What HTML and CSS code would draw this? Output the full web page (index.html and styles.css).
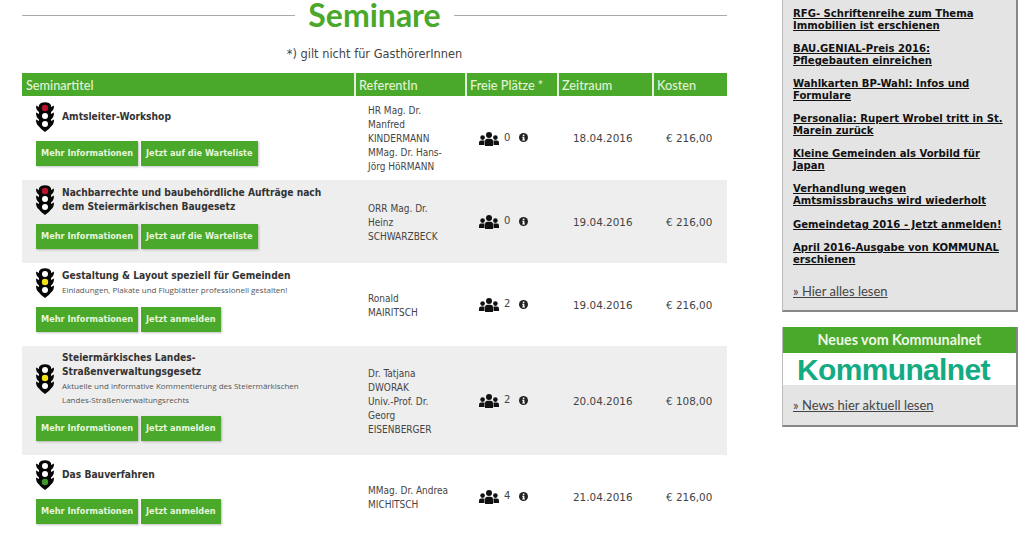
FILE: index.html
```html
<!DOCTYPE html>
<html lang="de">
<head>
<meta charset="UTF-8">
<meta name="viewport" content="width=device-width, initial-scale=1.0">
<title>Seminare</title>
<link rel="stylesheet" href="styles.css">
</head>
<body>

<svg class="sprites" width="0" height="0">
    <defs>
        <g id="light-body">
            <path d="M5 1 Q9 -0.5 13 1 L15 3 L15 5 L18 3.5 Q18 8 15 10 L15 12 L18 10.5 Q18 15.5 15 17.5 L15 19 L18 17.5 Q18 22.5 15 24.5 Q13 27.5 9 30 Q5 27.5 3 24.5 Q0 22.5 0 17.5 L3 19 L3 17.5 Q0 15.5 0 10.5 L3 12 L3 10 Q0 8 0 3.5 L3 5 L3 3 Z" fill="#050505"/>
        </g>
        <g id="people">
            <circle cx="10" cy="3" r="3"/>
            <circle cx="3.6" cy="5.6" r="2.3"/>
            <circle cx="16.4" cy="5.6" r="2.3"/>
            <path d="M6 14 L6 9.5 Q6 6.8 8.5 6.8 L11.5 6.8 Q14 6.8 14 9.5 L14 14 Z"/>
            <path d="M0 13 L0 10.5 Q0 8.5 2 8.5 L5.5 8.5 L5.5 13 Z"/>
            <path d="M20 13 L20 10.5 Q20 8.5 18 8.5 L14.5 8.5 L14.5 13 Z"/>
        </g>
        <g id="info">
            <circle cx="4.5" cy="4.5" r="4.5" fill="#222"/>
            <rect x="3.8" y="1.6" width="1.6" height="1.5" fill="#fff"/>
            <path d="M3.2 3.8 L5.4 3.8 L5.4 6.6 L6 6.6 L6 7.5 L3.2 7.5 L3.2 6.6 L3.8 6.6 L3.8 4.7 L3.2 4.7 Z" fill="#fff"/>
        </g>
    </defs>
</svg>

<div class="page">

    <main class="content">
        <div class="page-title">
            <h1>Seminare</h1>
        </div>
        <p class="note">*) gilt nicht für GasthörerInnen</p>

        <table class="seminars">
            <colgroup>
                <col class="col-title">
                <col class="col-ref">
                <col class="col-free">
                <col class="col-date">
                <col class="col-cost">
            </colgroup>
            <thead>
                <tr>
                    <th>Seminartitel</th>
                    <th>ReferentIn</th>
                    <th>Freie Plätze *</th>
                    <th>Zeitraum</th>
                    <th>Kosten</th>
                </tr>
            </thead>
            <tbody>
                <!-- Seminar 1 -->
                <tr>
                    <td class="cell-title">
                        <div class="seminar-head">
                            <svg class="light" viewBox="0 0 18 30"><use href="#light-body"/><circle cx="9" cy="6" r="3.2" fill="#b5122b"/><circle cx="9" cy="14" r="3" fill="#fff"/><circle cx="9" cy="22" r="3" fill="#fff"/></svg>
                            <div class="seminar-text">
                                <div class="seminar-name">Amtsleiter-Workshop</div>
                            </div>
                        </div>
                        <div class="actions">
                            <a class="btn" href="#">Mehr Informationen</a>
                            <a class="btn" href="#">Jetzt auf die Warteliste</a>
                        </div>
                    </td>
                    <td class="cell-ref">HR Mag. Dr.<br>Manfred<br>KINDERMANN<br>MMag. Dr. Hans-<br>Jörg HöRMANN</td>
                    <td class="cell-free">
                        <div class="free">
                            <svg class="people" viewBox="0 0 20 14"><use href="#people"/></svg>
                            <span class="free-count">0</span>
                            <svg class="info" viewBox="0 0 9 9"><use href="#info"/></svg>
                        </div>
                    </td>
                    <td class="cell-date">18.04.2016</td>
                    <td class="cell-cost">€ 216,00</td>
                </tr>
                <!-- Seminar 2 -->
                <tr>
                    <td class="cell-title">
                        <div class="seminar-head">
                            <svg class="light" viewBox="0 0 18 30"><use href="#light-body"/><circle cx="9" cy="6" r="3.2" fill="#b5122b"/><circle cx="9" cy="14" r="3" fill="#fff"/><circle cx="9" cy="22" r="3" fill="#fff"/></svg>
                            <div class="seminar-text">
                                <div class="seminar-name">Nachbarrechte und baubehördliche Aufträge nach<br>dem Steiermärkischen Baugesetz</div>
                            </div>
                        </div>
                        <div class="actions">
                            <a class="btn" href="#">Mehr Informationen</a>
                            <a class="btn" href="#">Jetzt auf die Warteliste</a>
                        </div>
                    </td>
                    <td class="cell-ref">ORR Mag. Dr.<br>Heinz<br>SCHWARZBECK</td>
                    <td class="cell-free">
                        <div class="free">
                            <svg class="people" viewBox="0 0 20 14"><use href="#people"/></svg>
                            <span class="free-count">0</span>
                            <svg class="info" viewBox="0 0 9 9"><use href="#info"/></svg>
                        </div>
                    </td>
                    <td class="cell-date">19.04.2016</td>
                    <td class="cell-cost">€ 216,00</td>
                </tr>
                <!-- Seminar 3 -->
                <tr>
                    <td class="cell-title">
                        <div class="seminar-head">
                            <svg class="light" viewBox="0 0 18 30"><use href="#light-body"/><circle cx="9" cy="6" r="3" fill="#fff"/><circle cx="9" cy="14" r="3.2" fill="#f2e01b"/><circle cx="9" cy="22" r="3" fill="#fff"/></svg>
                            <div class="seminar-text">
                                <div class="seminar-name">Gestaltung &amp; Layout speziell für Gemeinden</div>
                                <div class="seminar-desc">Einladungen, Plakate und Flugblätter professionell gestalten!</div>
                            </div>
                        </div>
                        <div class="actions">
                            <a class="btn" href="#">Mehr Informationen</a>
                            <a class="btn" href="#">Jetzt anmelden</a>
                        </div>
                    </td>
                    <td class="cell-ref">Ronald<br>MAIRITSCH</td>
                    <td class="cell-free">
                        <div class="free">
                            <svg class="people" viewBox="0 0 20 14"><use href="#people"/></svg>
                            <span class="free-count">2</span>
                            <svg class="info" viewBox="0 0 9 9"><use href="#info"/></svg>
                        </div>
                    </td>
                    <td class="cell-date">19.04.2016</td>
                    <td class="cell-cost">€ 216,00</td>
                </tr>
                <!-- Seminar 4 -->
                <tr>
                    <td class="cell-title">
                        <div class="seminar-head">
                            <svg class="light" viewBox="0 0 18 30"><use href="#light-body"/><circle cx="9" cy="6" r="3" fill="#fff"/><circle cx="9" cy="14" r="3.2" fill="#f2e01b"/><circle cx="9" cy="22" r="3" fill="#fff"/></svg>
                            <div class="seminar-text">
                                <div class="seminar-name">Steiermärkisches Landes-<br>Straßenverwaltungsgesetz</div>
                                <div class="seminar-desc">Aktuelle und informative Kommentierung des Steiermärkischen<br>Landes-Straßenverwaltungsrechts</div>
                            </div>
                        </div>
                        <div class="actions">
                            <a class="btn" href="#">Mehr Informationen</a>
                            <a class="btn" href="#">Jetzt anmelden</a>
                        </div>
                    </td>
                    <td class="cell-ref">Dr. Tatjana<br>DWORAK<br>Univ.-Prof. Dr.<br>Georg<br>EISENBERGER</td>
                    <td class="cell-free">
                        <div class="free">
                            <svg class="people" viewBox="0 0 20 14"><use href="#people"/></svg>
                            <span class="free-count">2</span>
                            <svg class="info" viewBox="0 0 9 9"><use href="#info"/></svg>
                        </div>
                    </td>
                    <td class="cell-date">20.04.2016</td>
                    <td class="cell-cost">€ 108,00</td>
                </tr>
                <!-- Seminar 5 -->
                <tr>
                    <td class="cell-title">
                        <div class="seminar-head">
                            <svg class="light" viewBox="0 0 18 30"><use href="#light-body"/><circle cx="9" cy="6" r="3" fill="#fff"/><circle cx="9" cy="14" r="3" fill="#fff"/><circle cx="9" cy="22" r="3.2" fill="#3f9a2c"/></svg>
                            <div class="seminar-text">
                                <div class="seminar-name">Das Bauverfahren</div>
                            </div>
                        </div>
                        <div class="actions">
                            <a class="btn" href="#">Mehr Informationen</a>
                            <a class="btn" href="#">Jetzt anmelden</a>
                        </div>
                    </td>
                    <td class="cell-ref">MMag. Dr. Andrea<br>MICHITSCH</td>
                    <td class="cell-free">
                        <div class="free">
                            <svg class="people" viewBox="0 0 20 14"><use href="#people"/></svg>
                            <span class="free-count">4</span>
                            <svg class="info" viewBox="0 0 9 9"><use href="#info"/></svg>
                        </div>
                    </td>
                    <td class="cell-date">21.04.2016</td>
                    <td class="cell-cost">€ 216,00</td>
                </tr>
            </tbody>
        </table>
    </main>

    <aside class="sidebar">
        <div class="panel panel-news">
            <a class="news-link" href="#">RFG- Schriftenreihe zum Thema Immobilien ist erschienen</a>
            <a class="news-link" href="#">BAU.GENIAL-Preis 2016: Pflegebauten einreichen</a>
            <a class="news-link" href="#">Wahlkarten BP-Wahl: Infos und Formulare</a>
            <a class="news-link" href="#">Personalia: Rupert Wrobel tritt in St. Marein zurück</a>
            <a class="news-link" href="#">Kleine Gemeinden als Vorbild für Japan</a>
            <a class="news-link" href="#">Verhandlung wegen Amtsmissbrauchs wird wiederholt</a>
            <a class="news-link" href="#">Gemeindetag 2016 - Jetzt anmelden!</a>
            <a class="news-link" href="#">April 2016-Ausgabe von KOMMUNAL erschienen</a>
            <a class="more-link" href="#">» Hier alles lesen</a>
        </div>

        <div class="panel panel-net">
            <h3 class="panel-head">Neues vom Kommunalnet</h3>
            <div class="net-logo">Kommunalnet</div>
            <div class="panel-foot">
                <a class="more-link" href="#">» News hier aktuell lesen</a>
            </div>
        </div>
    </aside>

</div>

</body>
</html>
```

FILE: styles.css
```css
html, body {
    height: 535px;
    overflow: hidden;
}
body {
    margin: 0;
    padding: 0;
    background-color: #fff;
    color: #444;
    font-family: "DejaVu Sans", Verdana, sans-serif;
    font-size: 10px;
}
.sprites {
    position: absolute;
}
.page {
    display: flex;
    padding-left: 22px;
    gap: 55px;
}
.content {
    width: 705px;
    flex: none;
}

/* heading with a rule either side */
.page-title {
    display: flex;
    align-items: center;
    gap: 13px;
    height: 30px;
}
.page-title::before,
.page-title::after {
    content: "";
    flex: 1;
    height: 1px;
    background-color: #aaa;
}
.page-title h1 {
    margin: 0;
    color: #4aa82a;
    font-family: Lato, sans-serif;
    font-size: 32px;
    font-weight: 700;
    line-height: 30px;
}
.note {
    margin: 17px 0 12px;
    text-align: center;
    font-size: 11.4px;
    line-height: 14px;
}

/* seminar table */
.seminars {
    width: 705px;
    table-layout: fixed;
    border-collapse: collapse;
}
.col-title { width: 333px; }
.col-ref { width: 111px; }
.col-free { width: 92px; }
.col-date { width: 95px; }
.col-cost { width: 74px; }
.seminars th {
    height: 23px;
    padding: 0 0 0 3px;
    background-color: #4aa82a;
    border-left: 2px solid #e4f0dc;
    color: #e2f3d8;
    font-family: Lato, sans-serif;
    font-size: 12.7px;
    font-weight: 500;
    text-align: left;
}
.seminars th:first-child {
    border-left: 0;
    padding-left: 4px;
}
.seminars tbody tr:nth-child(even) {
    background-color: #eee;
}
.seminars td {
    padding: 0;
    vertical-align: middle;
    line-height: 14px;
}
.cell-title {
    padding: 5px 0 14px 14px !important;
}
.seminar-head {
    display: flex;
    align-items: center;
    gap: 8px;
    min-height: 30px;
    margin-bottom: 9px;
}
.light {
    flex: none;
    width: 18px;
    height: 30px;
}
.seminar-name {
    color: #333;
    font-family: "DejaVu Sans Condensed", "DejaVu Sans", sans-serif;
    font-weight: 700;
    font-size: 10.2px;
    line-height: 14px;
}
.seminar-desc {
    color: #555;
    font-family: "Open Sans", sans-serif;
    font-size: 8px;
    line-height: 14px;
}
.actions {
    display: flex;
    gap: 3px;
}
.btn {
    display: block;
    height: 25px;
    padding: 0 5px;
    background-color: #4aa82a;
    box-shadow: 1px 1px 2px rgba(0, 0, 0, 0.25);
    color: #e6f6dc;
    font-family: "DejaVu Sans Condensed", "DejaVu Sans", sans-serif;
    font-size: 9.1px;
    font-weight: 700;
    line-height: 25px;
    text-decoration: none;
}
.cell-ref {
    padding: 8px 0 6px 13px !important;
    font-family: "DejaVu Sans Condensed", "DejaVu Sans", sans-serif;
    font-size: 10px;
}
.free {
    display: flex;
    align-items: center;
    padding-left: 13px;
}
.people {
    width: 20px;
    height: 14px;
    margin-top: 1px;
    fill: #111;
}
.free-count {
    margin: -1px 0 0 5px;
    width: 15px;
}
.info {
    width: 9px;
    height: 9px;
    margin-top: -1px;
}
.cell-date {
    padding-left: 15px !important;
    font-size: 10.4px;
}
.cell-cost {
    padding-left: 13px !important;
    font-size: 10.4px;
}

/* right column */
.sidebar {
    width: 236px;
    flex: none;
}
.panel {
    background-color: #e4e4e4;
    border-left: 1px solid #bbb;
    border-right: 2px solid #888;
    border-bottom: 2px solid #888;
    box-sizing: border-box;
}
.panel-news {
    height: 312px;
    padding: 8px 10px 0 10px;
    margin-bottom: 15px;
}
.news-link {
    display: block;
    margin-bottom: 11px;
    color: #111;
    font-family: "DejaVu Sans Condensed", "DejaVu Sans", sans-serif;
    font-size: 11.2px;
    font-weight: 700;
    line-height: 12px;
}
.news-link:nth-child(6) {
    margin-bottom: 12px;
}
.more-link {
    display: block;
    margin-top: 17px;
    color: #444;
    font-family: Lato, sans-serif;
    font-size: 13px;
    line-height: 16px;
}
.panel-net {
    height: 100px;
}
.panel-head {
    margin: 0;
    height: 26px;
    background-color: #4aa82a;
    color: #eef8e6;
    font-family: Lato, sans-serif;
    font-size: 14.3px;
    font-weight: 700;
    line-height: 26px;
    text-align: center;
}
.net-logo {
    height: 31px;
    padding: 1px 0 0 14px;
    background-color: #fff;
    color: #13ab82;
    font-family: "Liberation Sans", Arial, sans-serif;
    font-size: 30px;
    font-weight: 700;
    letter-spacing: -0.65px;
    line-height: 31px;
}
.panel-foot {
    padding: 0 10px;
}
.panel-foot .more-link {
    margin-top: 0;
    padding-top: 12px;
}
```
